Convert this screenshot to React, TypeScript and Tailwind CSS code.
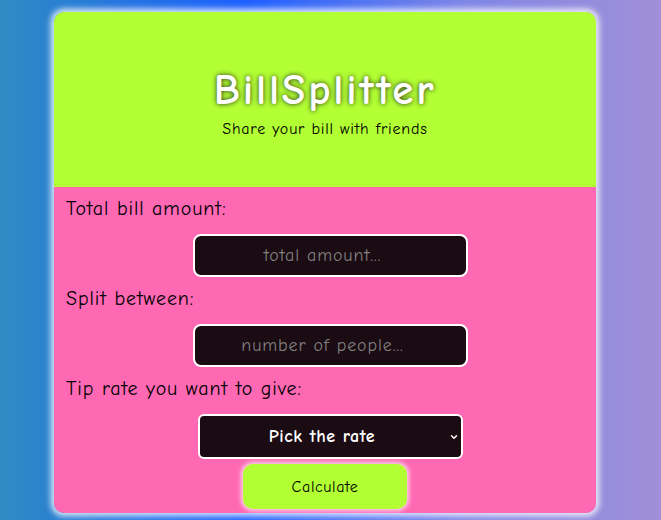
import { ChevronDown } from 'lucide-react';

const font = { fontFamily: '"Comic Sans MS", "Comic Neue", "DejaVu Sans", sans-serif' };

const fieldClass =
  'h-[43px] w-[275px] rounded-[8px] border-2 border-white bg-[#1b0b12] text-center text-[18px] tracking-[0.9px] text-white outline-none placeholder:text-[#808080]';

const App = () => {
  return (
    <div
      className="min-h-[520px] w-full bg-[linear-gradient(to_right,#2f8bc2_0%,#1c5fff_37%,#7f86e6_70%,#a08fd8_100%)] px-[54px] pt-[12px] pb-[7px] text-black"
      style={font}
    >
      <div className="mr-[11px] overflow-hidden rounded-[10px] shadow-[0_0_6px_3px_rgba(255,255,255,0.85)]">
        {/* Header */}
        <div className="flex h-[175px] flex-col items-center justify-center bg-[#b2ff33] pt-[5px]">
          <h1 className="text-[43px] font-bold leading-[50px] tracking-[2.8px] text-white [text-shadow:0_0_5px_rgba(30,30,30,0.95)]">
            BillSplitter
          </h1>
          <p className="mt-[3px] text-[16px] leading-[22px] tracking-[0.8px]">Share your bill with friends</p>
        </div>

        {/* Form */}
        <div className="flex flex-col bg-[#ff69b4] px-3 pt-2 pb-1">
          <label className="text-[20px] leading-[28px] tracking-[0.9px]">Total bill amount:</label>
          <div className="mt-[11px] mb-2 flex justify-center pl-[10px]">
            <input type="number" placeholder="total amount..." className={fieldClass} />
          </div>

          <label className="text-[20px] leading-[28px] tracking-[0.9px]">Split between:</label>
          <div className="mt-[11px] mb-2 flex justify-center pl-[10px]">
            <input type="number" placeholder="number of people..." className={fieldClass} />
          </div>

          <label className="text-[20px] leading-[28px] tracking-[0.9px]">Tip rate you want to give:</label>
          <div className="mt-[11px] flex justify-center pl-[10px]">
            <div className="relative w-[265px]">
              <select className="h-[45px] w-full appearance-none rounded-[6px] border-2 border-white bg-[#1b0b12] pr-4 text-center text-[18px] font-bold tracking-[0.6px] text-white outline-none">
                <option>Pick the rate</option>
                <option>5%</option>
                <option>10%</option>
                <option>15%</option>
                <option>20%</option>
              </select>
              <ChevronDown
                className="pointer-events-none absolute top-1/2 right-[4px] h-[10px] w-[10px] -translate-y-1/2 text-white"
                strokeWidth={3.5}
              />
            </div>
          </div>

          <button className="mx-auto mt-[5px] h-[45px] w-[164px] rounded-[10px] bg-[#b2ff33] text-[16px] tracking-[0.6px] shadow-[0_0_4px_2px_rgba(255,220,235,0.9)]">
            Calculate
          </button>
        </div>
      </div>
    </div>
  );
};

export default App;
